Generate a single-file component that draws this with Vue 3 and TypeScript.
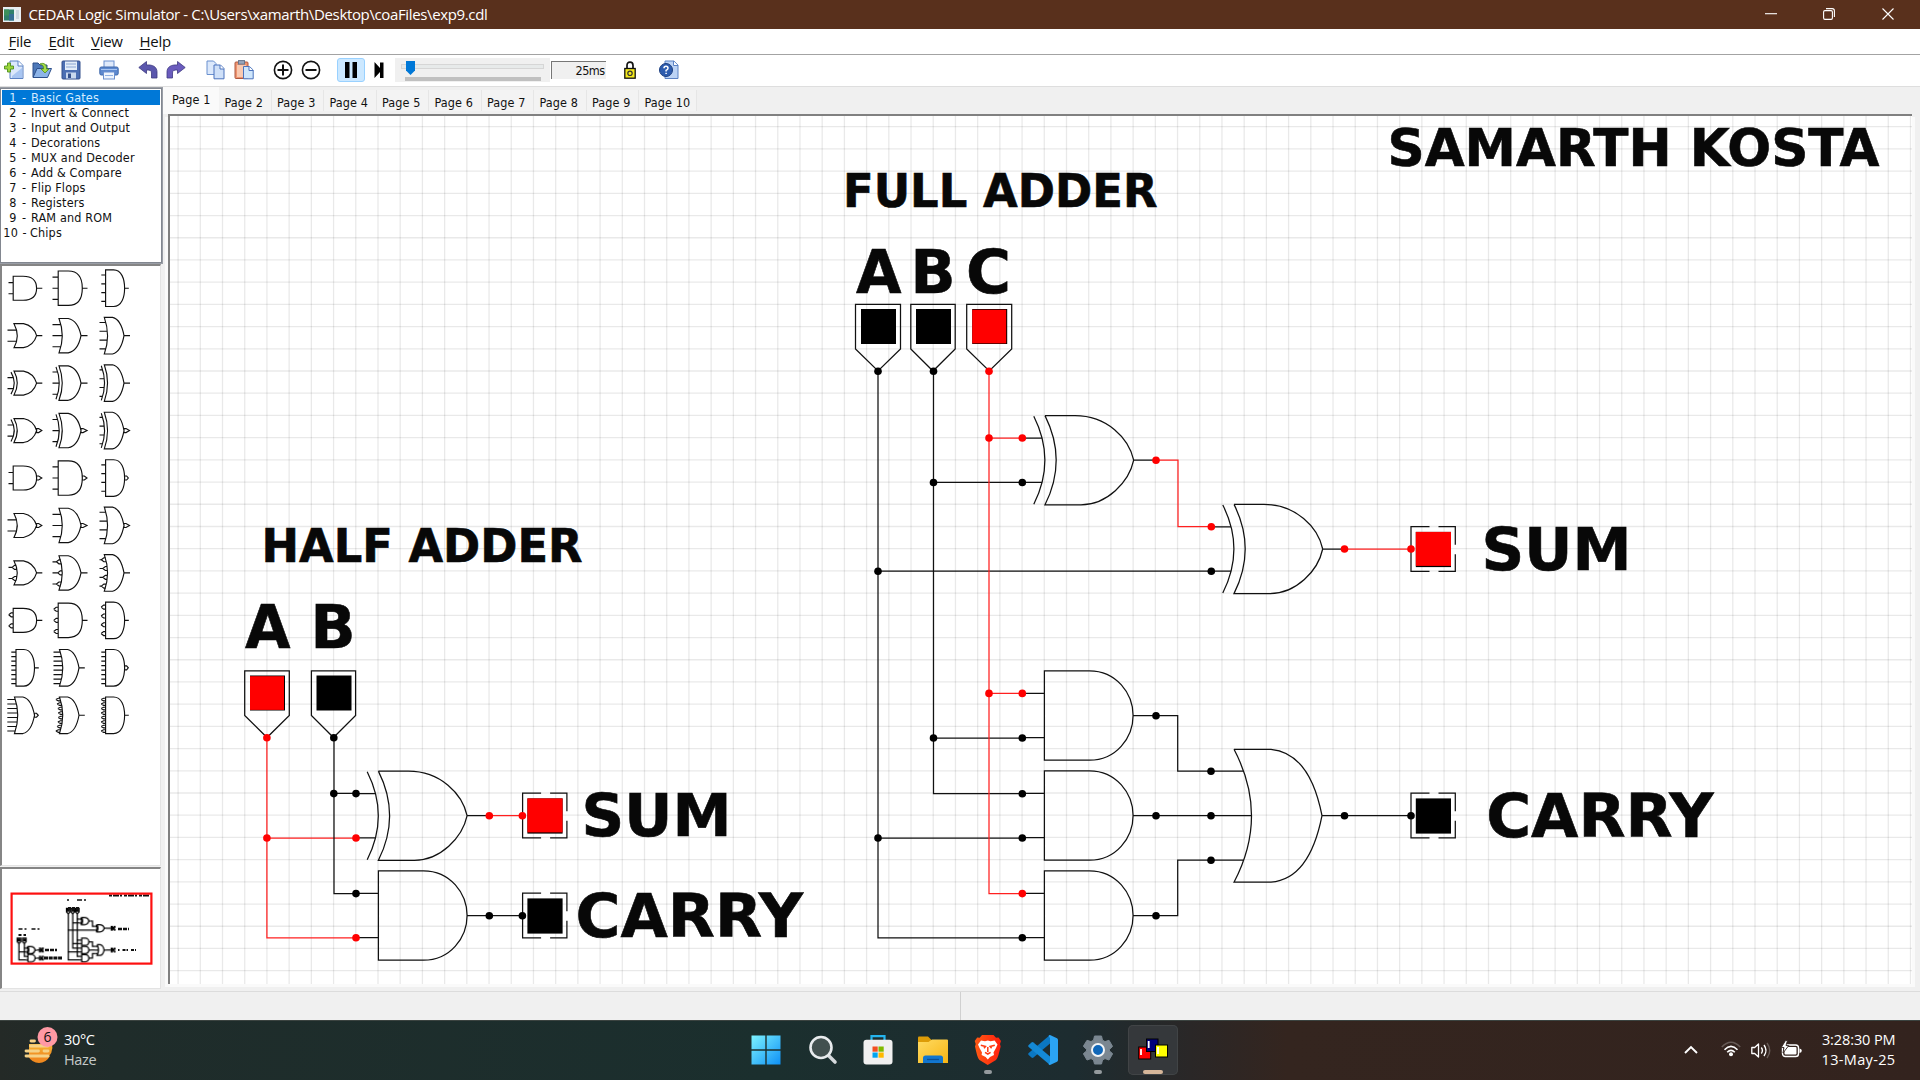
<script setup lang="ts">
interface Label {
  text: string
  x: number
  y: number
  size: number
  width: number
}
interface Wire {
  d: string
  on: boolean
}
interface Dot {
  x: number
  y: number
  on: boolean
}
interface Toggle {
  x: number
  y: number
  w: number
  on: boolean
}
interface Lamp {
  x: number
  y: number
  on: boolean
}
interface PaletteGate {
  col: number
  row: number
  kind: 'and' | 'or' | 'xor'
  inputs: number
  invertOut?: boolean
  invertIn?: boolean
}

const menus = ['File', 'Edit', 'View', 'Help']
const pages = Array.from({ length: 10 }, (_, i) => `Page ${i + 1}`)
const library = [
  'Basic Gates', 'Invert & Connect', 'Input and Output', 'Decorations', 'MUX and Decoder',
  'Add & Compare', 'Flip Flops', 'Registers', 'RAM and ROM', 'Chips',
]

/* ---------- schematic ---------- */
const STEP = 22.21
const gridX = Array.from({ length: 79 }, (_, i) => 178.1 + i * STEP)
const gridY = Array.from({ length: 39 }, (_, i) => 126.7 + i * STEP)

const labels: Label[] = [
  { text: 'SAMARTH KOSTA', x: 1387.5, y: 165.5, size: 51, width: 492 },
  { text: 'FULL ADDER', x: 843, y: 207, size: 46.2, width: 314.5 },
  { text: 'A', x: 856, y: 293, size: 60, width: 45.5 },
  { text: 'B', x: 910.5, y: 293, size: 60, width: 45 },
  { text: 'C', x: 966, y: 293, size: 60, width: 45 },
  { text: 'HALF ADDER', x: 261.5, y: 562.3, size: 46.2, width: 321 },
  { text: 'A', x: 245, y: 648.3, size: 60, width: 45.5 },
  { text: 'B', x: 310.5, y: 648.3, size: 60, width: 45 },
  { text: 'SUM', x: 581.5, y: 836.3, size: 59, width: 150 },
  { text: 'CARRY', x: 575.5, y: 937, size: 60, width: 227.500 },
  { text: 'SUM', x: 1481.5, y: 570, size: 59, width: 150 },
  { text: 'CARRY', x: 1486.2, y: 837, size: 60, width: 227.500 },
]

const xorGates = [
  { x: 1045, y: 460.2 },
  { x: 1234, y: 549 },
  { x: 378.4, y: 815.7 },
]
const andGates = [
  { x: 1044.4, y: 715.5 },
  { x: 1044.4, y: 815.5 },
  { x: 1044.4, y: 915.5 },
  { x: 378.4, y: 915.5 },
]

const wires: Wire[] = [
  { d: 'M878 371V937.8H1022.3M878 571H1211.3M878 838H1022.3', on: false },
  { d: 'M933.5 371V793.7H1022.3M933.5 482.3H1022.3M933.5 738H1022.3', on: false },
  { d: 'M989 371V893.5H1022.3M989 438H1022.3M989 693.3H1022.3', on: true },
  { d: 'M1156 460.2H1178V526.7H1211.3', on: true },
  { d: 'M1344.5 549H1411', on: true },
  { d: 'M1156 715.7H1177.7V771H1211', on: false },
  { d: 'M1156 815.7H1211', on: false },
  { d: 'M1156 915.7H1177.7V860.2H1211', on: false },
  { d: 'M1344.5 815.7H1411', on: false },
  { d: 'M266.9 737.7V937.9H356M266.9 838H356', on: true },
  { d: 'M334 737.7V893.5H356M334 793.4H356', on: false },
  { d: 'M489.3 815.7H522.4', on: true },
  { d: 'M489.3 915.7H522.4', on: false },
]

const on = (x: number, y: number): Dot => ({ x, y, on: true })
const off = (x: number, y: number): Dot => ({ x, y, on: false })
const dots: Dot[] = [
  off(878, 371.3), off(933.5, 371.3), on(989, 371.3),
  on(989, 438), on(1022.3, 438), off(933.5, 482.5), off(1022.3, 482.5),
  off(878, 571.2), off(1211.3, 571.2), on(1156, 460.2), on(1211.3, 526.8),
  on(1344.5, 549), on(1411, 549),
  on(989, 693.4), on(1022.3, 693.4), off(933.5, 738), off(1022.3, 738),
  off(1022.3, 793.7), off(878, 838), off(1022.3, 838), on(1022.3, 893.6), off(1022.3, 937.8),
  off(1156, 715.7), off(1156, 815.7), off(1156, 915.7),
  off(1211, 771.2), off(1211, 815.7), off(1211, 860.2), off(1344.5, 815.7), off(1411, 815.7),
  on(266.9, 737.8), off(333.8, 737.8), off(333.8, 793.6), off(356, 793.6),
  on(266.9, 838), on(356, 838), off(356, 893.6), on(356, 937.8),
  on(489.3, 815.7), on(522.4, 815.7), off(489.3, 915.7), off(522.4, 915.7),
]

const toggles: Toggle[] = [
  { x: 878, y: 371, w: 45, on: false },
  { x: 933, y: 371, w: 44.4, on: false },
  { x: 989.2, y: 371, w: 45, on: true },
  { x: 267, y: 737.5, w: 44.6, on: true },
  { x: 333.5, y: 737.5, w: 44.2, on: false },
]
const lamps: Lamp[] = [
  { x: 522.6, y: 793.2, on: true },
  { x: 522.6, y: 893.2, on: false },
  { x: 1411, y: 526.700, on: true },
  { x: 1411, y: 793.2, on: false },
]

/* ---------- gate palette ---------- */
const gates: PaletteGate[] = []
const kinds: Omit<PaletteGate, 'col' | 'row' | 'inputs'>[] = [
  { kind: 'and' },
  { kind: 'or' },
  { kind: 'xor' },
  { kind: 'xor', invertOut: true },
  { kind: 'and', invertOut: true },
  { kind: 'or', invertOut: true },
  { kind: 'or', invertIn: true },
  { kind: 'and', invertIn: true },
]
kinds.forEach((k, row) => {
  for (let col = 0; col < 3; col++) gates.push({ ...k, row, col, inputs: col + 2 })
})
gates.push({ col: 0, row: 8, kind: 'and', inputs: 8 })
gates.push({ col: 1, row: 8, kind: 'or', inputs: 8 })
gates.push({ col: 2, row: 8, kind: 'and', inputs: 8, invertOut: true })
gates.push({ col: 0, row: 9, kind: 'or', inputs: 8, invertOut: true })
gates.push({ col: 1, row: 9, kind: 'or', inputs: 8, invertIn: true })
gates.push({ col: 2, row: 9, kind: 'and', inputs: 8, invertIn: true })

function gatePath(g: PaletteGate): string {
  const cy = 288.2 + g.row * 47.45
  const wide = g.inputs === 8
  const h = wide || g.inputs === 4 ? 18.3 : g.inputs === 3 ? 17.2 : 12
  const left = wide ? [g.row === 8 ? 16 : 14.5, 59.5, 105.6][g.col] : [g.kind === 'and' ? 13.2 : 14, g.kind === 'and' ? 58.2 : 59, g.kind === 'and' ? 105.6 : 104.3][g.col]
  const tip = wide ? [34.5, 79, 124.6][g.col] : [36.6, g.kind === 'and' ? 82.3 : 81, g.kind === 'and' ? 124.6 : 124][g.col]
  const end = wide ? [38.8, 84.8, 128.8][g.col] : [42.3, 87.5, g.kind === 'and' ? 128.8 : 130][g.col]
  const pin0 = wide ? [g.row === 8 ? 11.3 : 8.3, 53.5, 101.3][g.col] : [8.5, 52.5, g.kind === 'and' ? 101.3 : 99.5][g.col]
  const gap = wide ? 4.5 : g.inputs === 4 ? 8.8 : 11.1
  const curved = g.kind !== 'and'
  const mid = left + (tip - left) * 0.42
  const parts: string[] = []
  if (curved) {
    parts.push(`M${left} ${cy - h}Q${left + 6.5} ${cy} ${left} ${cy + h}H${mid}Q${tip - 3} ${cy + h - 2} ${tip} ${cy}Q${tip - 3} ${cy - h + 2} ${mid} ${cy - h}Z`)
  } else {
    parts.push(`M${left} ${cy - h}V${cy + h}H${mid}C${tip - 3} ${cy + h} ${tip} ${cy + h * 0.5} ${tip} ${cy}C${tip} ${cy - h * 0.5} ${tip - 3} ${cy - h} ${mid} ${cy - h}Z`)
  }
  if (g.kind === 'xor') parts.push(`M${left - 3} ${cy - h + 1}Q${left + 3.5} ${cy} ${left - 3} ${cy + h - 1}`)
  for (let i = 0; i < g.inputs; i++) {
    const shift = (i - (g.inputs - 1) / 2) * gap
    const py = cy + shift
    const bend = curved ? 3.25 * (1 - (shift * shift) / (h * h)) : 0
    const px = left + bend - (g.kind === 'xor' ? 3 : 0)
    if (g.invertIn) {
      const r = wide ? 1.3 : 2
      parts.push(`M${px - 4.5} ${py}L${px - 2} ${py - r}H${px}M${px - 4.5} ${py}L${px - 2} ${py + r}H${px}`)
      if (curved && !wide) parts.push(`M${pin0} ${py}H${px - 4}`)
    } else {
      parts.push(`M${curved && g.col === 0 ? pin0 - 1 : pin0} ${py}H${px}`)
    }
  }
  if (g.invertOut) parts.push(`M${tip} ${cy - 2}H${tip + 2}L${end - 0.5} ${cy}L${tip + 2} ${cy + 2}H${tip}Z`)
  else parts.push(`M${tip} ${cy}H${end}`)
  return parts.join('')
}
</script>

<template>
  <div class="app">
    <header class="titlebar">
      <svg class="app-icon" viewBox="0 0 18 15">
        <rect x="0" y="0" width="18" height="15" fill="#e9eef2" />
        <rect x="1" y="2.5" width="10" height="11" fill="#2f7f6a" />
        <rect x="1" y="2.5" width="5" height="6" fill="#3d8f5c" />
        <rect x="6" y="7" width="5" height="6.5" fill="#356d92" />
        <rect x="13" y="3" width="3" height="9" fill="#cfd8e0" />
      </svg>
      <span class="title">CEDAR Logic Simulator - C:\Users\xamarth\Desktop\coaFiles\exp9.cdl</span>
      <div class="window-buttons">
        <svg viewBox="0 0 12 12"><path d="M0 5.7H12" /></svg>
        <svg viewBox="0 0 12 12"><rect x=".6" y="2.6" width="8.8" height="8.8" rx="1.3" /><path d="M3 .6H9.3Q11.4.6 11.4 2.7V9" /></svg>
        <svg viewBox="0 0 12 12"><path d="M.5.5 11.5 11.5M11.5.5.5 11.5" /></svg>
      </div>
    </header>

    <nav class="menubar">
      <span v-for="m in menus" :key="m" class="menu" :class="m.toLowerCase()"><u>{{ m[0] }}</u>{{ m.slice(1) }}</span>
    </nav>

    <div class="toolbar">
      <div class="group">
        <svg viewBox="0 0 20 20">
          <path d="M6 1H14.500L19 5.500V18.500H6Z" fill="#dbe8fb" stroke="#5b82c4" />
          <path d="M14 1V6H19" fill="#fff" stroke="#5b82c4" />
          <path d="M8 16 18 8V18H8Z" fill="#a9c6f2" />
          <path d="M3.500 3H6.500V6H9.500V9H6.500V12H3.500V9H.5V6H3.500Z" fill="#9bd63c" stroke="#4f8f1d" stroke-width=".9" />
        </svg>
        <svg viewBox="0 0 20 20">
          <path d="M1 17V3H6L8 5H15V17Z" fill="#4d78b8" stroke="#2c4f8a" />
          <path d="M1 17.500 5 8.500H19.500L15.500 17.500Z" fill="#8db4e8" stroke="#2c4f8a" />
          <path d="M8 4C12 2 15 5 14.500 9H17L13 13 9 9H11.500C12 6 10.500 5 8 4Z" fill="#a5dc4b" stroke="#4f8f1d" stroke-width=".8" />
        </svg>
        <svg viewBox="0 0 20 20">
          <rect x="1" y="1" width="18" height="18" rx="1" fill="#4c6fb3" stroke="#34508c" />
          <rect x="4" y="1.500" width="12" height="8.500" fill="#e4edf8" />
          <path d="M5 4H15M5 7H15" stroke="#8aa6d3" />
          <rect x="5" y="12.500" width="10" height="6" fill="#c9d8ee" />
          <rect x="7" y="13.500" width="3" height="4.500" fill="#34508c" />
        </svg>
      </div>
      <div class="group">
        <svg viewBox="0 0 20 20">
          <rect x="5" y="1" width="10" height="7" fill="#dfeafb" stroke="#6a90cf" />
          <rect x=".8" y="7" width="18.400" height="8" rx="1.500" fill="#5d89cf" stroke="#3f68ab" />
          <path d="M2 9.500H18" stroke="#a9c6f2" />
          <rect x="4.500" y="12" width="11" height="7" fill="#eef4fd" stroke="#6a90cf" />
          <path d="M6 15.500H14" stroke="#8fb0e2" />
        </svg>
      </div>
      <div class="group">
        <svg viewBox="0 0 20 20"><path d="M.8 7.500 8.500 1.500V5C15 4.500 19 7 19 12V18H13.500V13C13.500 10.500 12 9.800 8.500 10V13.500Z" fill="#5b57ad" stroke="#3d3a80" stroke-width=".8" /></svg>
        <svg viewBox="0 0 20 20"><path d="M19.200 7.500 11.500 1.500V5C5 4.500 1 7 1 12V18H6.500V13C6.500 10.500 8 9.800 11.500 10V13.500Z" fill="#6a5bbd" stroke="#3d3a80" stroke-width=".8" /></svg>
      </div>
      <div class="group">
        <svg viewBox="0 0 20 20">
          <path d="M2 1H8.500L11 3.500V14.500H2Z" fill="#dbe8fb" stroke="#6a90cf" />
          <path d="M9 5H15.500L19 8.500V18.800H9Z" fill="#cfe0f8" stroke="#4b73bd" />
          <path d="M15 5V9H19" fill="#fff" stroke="#4b73bd" />
        </svg>
        <svg viewBox="0 0 20 20">
          <rect x="1" y="2" width="13" height="16.500" rx="1" fill="#ee9470" stroke="#ad5840" />
          <rect x="3" y="5" width="9" height="12" fill="#f9c9b0" />
          <rect x="4.500" y=".6" width="6" height="3.500" fill="#9aa8bd" stroke="#66758e" />
          <path d="M9.500 6.500H15.500L19.200 10V18.800H9.500Z" fill="#cfe6fb" stroke="#4b73bd" />
          <path d="M15 6.500V10.500H19" fill="#fff" stroke="#4b73bd" />
        </svg>
      </div>
      <div class="group zoom">
        <svg viewBox="0 0 20 20"><circle cx="10" cy="10" r="8.600" fill="none" stroke="#111" stroke-width="1.600" /><path d="M4.500 10H15.500M10 4.500V15.500" stroke="#111" stroke-width="2" /></svg>
        <svg viewBox="0 0 20 20"><circle cx="10" cy="10" r="8.600" fill="none" stroke="#111" stroke-width="1.600" /><path d="M4.500 10H15.500" stroke="#111" stroke-width="2" /></svg>
      </div>
      <div class="pause"><svg viewBox="0 0 20 20"><path d="M4 2H8.500V18H4ZM11.500 2H16V18H11.500Z" fill="#000" /></svg></div>
      <svg class="step" viewBox="0 0 10 18"><path d="M.5 1 6 7V1.500H9.500V17H6V11L.5 17Z" fill="#000" /></svg>
      <div class="slider">
        <div class="track"></div>
        <svg class="thumb" viewBox="0 0 9 14"><path d="M0 0H9V9.500L4.500 14 0 9.500Z" fill="#0078d7" /></svg>
        <div class="gauge"></div>
      </div>
      <div class="readout">25ms</div>
      <svg class="lock" viewBox="0 0 12 18">
        <path d="M3 8V4.500Q3 1.200 6 1.200T9 4.500V8" fill="none" stroke="#111" stroke-width="1.700" />
        <rect x=".8" y="7.500" width="10.400" height="9.700" fill="#f4e91d" stroke="#111" stroke-width="1.300" />
        <circle cx="6" cy="12.300" r="2.200" fill="none" stroke="#333" stroke-width="1.200" />
      </svg>
      <svg class="help-icon" viewBox="0 0 20 20">
        <path d="M6 1H15L19 5V18.500H6Z" fill="#bcd3f5" stroke="#5b82c4" />
        <path d="M14.500 1V5.500H19" fill="#fff" stroke="#5b82c4" />
        <circle cx="7" cy="10" r="6.500" fill="#2d5cae" stroke="#1d3f80" />
        <path d="M5 8.300Q5 6.300 7 6.300T9 8.200Q9 9.300 7.100 10.300V11.500M7.100 12.700V14" fill="none" stroke="#fff" stroke-width="1.500" />
      </svg>
    </div>

    <main class="workspace">
      <aside class="sidebar">
        <ul class="library">
          <li v-for="(name, i) in library" :key="name" :class="{ selected: i === 0 }">
            <span class="num">{{ i + 1 }}</span><span class="dash">-</span><span>{{ name }}</span>
          </li>
        </ul>
        <div class="palette">
          <svg viewBox="2 266 158 599">
            <path v-for="(g, i) in gates" :key="i" :d="gatePath(g)" fill="none" stroke="#111" stroke-width="1.150" />
          </svg>
        </div>
        <div class="overview">
          <svg viewBox="2 869 158 119">
            <g class="mini" transform="translate(-2.600 883.500) scale(.0807 .0815)">
              <use href="#schematic" />
            </g>
            <g stroke="#111" fill="none">
              <path d="M109 895.500H150" stroke-width="2" stroke-dasharray="3 1 6 1 2 2" />
              <path d="M67 900H90" stroke-width="1.600" stroke-dasharray="2 8 5 2" />
              <path d="M68 908.500H79" stroke-width="3" stroke-dasharray="3 1" />
              <path d="M18.500 929H42" stroke-width="1.600" stroke-dasharray="4 2 2 5" />
              <path d="M18.500 935H26" stroke-width="2" stroke-dasharray="3 2" />
              <path d="M45 950H57M118 929H129" stroke-width="2.400" stroke-dasharray="4 1" />
              <path d="M44 958H62" stroke-width="3" stroke-dasharray="4 .7" />
              <path d="M118 950H136" stroke-width="2" stroke-dasharray="1.500 3 3 1" />
            </g>
            <rect x="11.600" y="893.600" width="139.800" height="70" fill="none" stroke="#fd1010" stroke-width="2.200" />
          </svg>
        </div>
      </aside>

      <section class="document">
        <div class="tabs">
          <span v-for="(p, i) in pages" :key="p" class="tab" :class="{ active: i === 0 }">{{ p }}</span>
        </div>
        <div class="canvas">
          <svg viewBox="170 116 1742 868">
            <g stroke="#000" stroke-opacity=".085" stroke-width="1.300">
              <line v-for="x in gridX" :key="'x' + x" :x1="x" :x2="x" y1="116" y2="984" />
              <line v-for="y in gridY" :key="'y' + y" x1="170" x2="1912" :y1="y" :y2="y" />
            </g>
            <g id="schematic" class="schematic">
              <path v-for="(g, i) in xorGates" :key="'xg' + i" :transform="`translate(${g.x} ${g.y})`"
                d="M-22.500 -22.200H-2.500M-22.500 22.200H-2.500M88.700 0H111M0 -44.600H30C62 -44.600 84 -22 88.700 0C84 22 62 44.600 36 44.600H0Q22.400 0 0 -44.600M-11.200 -44Q11 0 -11.200 44" />
              <path v-for="(g, i) in andGates" :key="'ag' + i" :transform="`translate(${g.x} ${g.y})`"
                d="M-22.500 -22.200H0M-22.500 22.200H0M88.700 0H111M0 -44.700H45C72 -44.700 88.700 -22 88.700 0S72 44.700 45 44.700H0Z" />
              <path d="M1211 771H1243.800M1211 815.700H1251.500M1211 860.200H1243.800M1322 815.700H1344.500M1234 749.300H1271C1300 752 1315 780 1322 815.700C1315 851 1300 880 1271 882.200H1234Q1269 815.700 1234 749.300" />
              <path v-for="(w, i) in wires" :key="'w' + i" :d="w.d" :class="{ live: w.on }" />
              <g v-for="(t, i) in toggles" :key="'t' + i" :transform="`translate(${t.x} ${t.y})`">
                <path :d="`M${-t.w / 2} -66.600H${t.w / 2}V-22L0 0L${-t.w / 2} -22Z`" />
                <rect class="block" x="-17" y="-62" width="35" height="35" />
                <rect v-if="t.on" class="block live" x="-17" y="-61.300" width="34" height="33.700" />
              </g>
              <g v-for="(l, i) in lamps" :key="'l' + i" :transform="`translate(${l.x} ${l.y})`">
                <path d="M18.500 0H0V44.600H18.500M27.500 0H44.300V18M44.300 27.500V44.600H27.500" />
                <rect class="block" x="4.800" y="5.200" width="35.200" height="35.200" />
                <rect v-if="l.on" class="block live" x="4.800" y="5.200" width="35.200" height="34" />
              </g>
              <circle v-for="(c, i) in dots" :key="'c' + i" class="dot" :class="{ live: c.on }" :cx="c.x" :cy="c.y" r="3.800" />
            </g>
            <text v-for="(l, i) in labels" :key="'l' + i" class="label" :x="l.x" :y="l.y" :font-size="l.size"
              :textLength="l.width" lengthAdjust="spacingAndGlyphs">{{ l.text }}</text>
          </svg>
        </div>
      </section>
    </main>

    <footer class="statusbar"><div></div><div></div></footer>

    <div class="taskbar">
      <div class="weather">
        <svg viewBox="0 0 36 38">
          <defs>
            <linearGradient id="sun" x1="0" y1="0" x2="0" y2="1"><stop offset="0" stop-color="#f8b833" /><stop offset="1" stop-color="#ec7a1c" /></linearGradient>
          </defs>
          <path d="M5 17H28A13.500 13.500 0 0 1 5 29.500Z" fill="url(#sun)" />
          <path d="M4 29Q8 36 15 36Q22 36 26 29Z" fill="#f08a20" />
          <g stroke="#f5d287" stroke-width="2.800" stroke-linecap="round">
            <path d="M7 14H10.500M6.500 19H24M2 24H14.500M20 24H24M2 29H24" />
          </g>
          <circle cx="23.500" cy="10" r="10" fill="#ff99a4" />
          <text x="23.500" y="15.200" text-anchor="middle" font-size="14" fill="#111">6</text>
        </svg>
        <div class="weather-text"><div>30°C</div><div class="dim">Haze</div></div>
      </div>
      <div class="apps">
        <div class="cell start">
          <svg viewBox="0 0 30 30">
            <defs><linearGradient id="win" x1="0" y1="0" x2="1" y2="1"><stop offset="0" stop-color="#7df3ff" /><stop offset="1" stop-color="#0e90f5" /></linearGradient></defs>
            <path d="M.5.5H14.300V14.300H.5ZM15.700.5H29.500V14.300H15.700ZM.5 15.700H14.300V29.500H.5ZM15.700 15.700H29.500V29.500H15.700Z" fill="url(#win)" />
          </svg>
        </div>
        <div class="cell">
          <svg viewBox="0 0 30 30">
            <path d="M20.500 20.500 27 27" stroke="#d5d9dc" stroke-width="3.600" stroke-linecap="round" />
            <circle cx="13" cy="12.500" r="10.500" fill="#42504f" stroke="#e8ebed" stroke-width="2.600" />
          </svg>
        </div>
        <div class="cell">
          <svg viewBox="0 0 30 30">
            <path d="M8.500 6V1.200H21.500V6" fill="none" stroke="#24b4ee" stroke-width="2.200" />
            <rect x=".5" y="4.800" width="29" height="24.700" rx="3" fill="#f0f0f0" />
            <rect x="9.500" y="11.500" width="5.200" height="5.200" fill="#f25022" /><rect x="15.500" y="11.500" width="5.200" height="5.200" fill="#7fba00" />
            <rect x="9.500" y="17.500" width="5.200" height="5.200" fill="#00a4ef" /><rect x="15.500" y="17.500" width="5.200" height="5.200" fill="#ffb900" />
          </svg>
        </div>
        <div class="cell">
          <svg viewBox="0 0 30 30">
            <defs><linearGradient id="dir" x1="0" y1="0" x2="1" y2="1"><stop offset="0" stop-color="#ffdb62" /><stop offset="1" stop-color="#f7b514" /></linearGradient></defs>
            <path d="M0 12V2.500Q0 1.500 1 1.500H10L13.500 5V12Z" fill="#dd9c07" />
            <path d="M0 7H10.500L14 4.500H29Q30 4.500 30 5.500V28H0Z" fill="url(#dir)" />
            <path d="M5 28V23Q5 20.500 7.500 20.500H22.500Q25 20.500 25 23V28Z" fill="#1276cf" />
            <path d="M9 24.500H21" stroke="#0b4f96" stroke-width="1.300" />
          </svg>
        </div>
        <div class="cell">
          <svg viewBox="0 0 30 30">
            <defs><linearGradient id="lion" x1="0" y1="0" x2="1" y2="0"><stop offset="0" stop-color="#ff5a14" /><stop offset="1" stop-color="#ff1f0e" /></linearGradient></defs>
            <path d="M9 0H20.500L23 2.700 25.500 2.500 28 6 27 9 27.700 11.500C26 18 25 23 23 25L14.700 30 6.500 25C4.500 23 3.500 18 2 11.500L2.700 9 1.700 6 4.200 2.500 6.700 2.700Z" fill="url(#lion)" />
            <path d="M8 5.500 12 6.300 14.800 5.500 17.600 6.300 21.600 5.500 24.500 9.500 23 13 20.500 17.500 21 20 17 22 14.800 24.500 12.600 22 8.600 20 9 17.500 6.500 13 5 9.500Z" fill="#fff" />
            <path d="M7.800 10.300 12.500 11.500 11 13.300M21.800 10.300 17.100 11.500 18.600 13.300M14.800 12V17M12 17.300 14.800 19 17.600 17.300" fill="none" stroke="#ff3c12" stroke-width="1.500" />
          </svg>
          <i class="run"></i>
        </div>
        <div class="cell">
          <svg viewBox="0 0 30 30">
            <path d="M22 0V8.500L5.500 22.500Q4.500 23.300 3.500 22.500L.7 20Q-.3 19 .7 18Z" fill="#0b77c2" />
            <path d="M22 30V21.500L5.500 7.500Q4.500 6.700 3.500 7.500L.7 10Q-.3 11 .7 12Z" fill="#1489d6" />
            <path d="M22 0 29 3.200Q30 3.700 30 5V25Q30 26.300 29 26.800L22 30Q21 30 20.500 29L22 27V3L20.500 1Q21 0 22 0Z" fill="#2ba3f3" />
          </svg>
        </div>
        <div class="cell">
          <svg viewBox="0 0 30 30">
            <path d="M11.500 1H18.500L19.500 5.200 22 6.600 26 5.300 29.500 11.300 29.500 11.500 26.500 14.300V16L29.700 18.700 26 25 22 23.600 19.500 25 18.500 29H11.500L10.500 25 8 23.600 4 25 .3 18.700 3.500 16V14.300L.3 11.300 4 5.300 8 6.600 10.500 5.200Z" fill="#7b8791" stroke="#7b8791" stroke-linejoin="round" />
            <circle cx="15" cy="15" r="6" fill="#1067b8" stroke="#f2f4f6" stroke-width="2" />
          </svg>
          <i class="run"></i>
        </div>
        <div class="cell current">
          <svg viewBox="0 0 30 30">
            <g stroke="#000">
              <rect x=".7" y="12" width="12" height="12" fill="#f00" />
              <rect x="8.500" y="4" width="11.500" height="12.500" fill="#00007c" />
              <rect x="17.500" y="10" width="12" height="12" fill="#ff0" />
            </g>
            <path d="M3 14V20M10.700 6V13M20 12V19" stroke="#fff" stroke-width="1.800" />
          </svg>
          <i class="run wide"></i>
        </div>
      </div>
      <div class="tray">
        <svg class="chevron" viewBox="0 0 14 9"><path d="M1 8 7 2 13 8" fill="none" stroke="#fff" stroke-width="1.900" /></svg>
        <svg class="wifi" viewBox="0 0 20 16">
          <path d="M.8 6Q10 -3.500 19.200 6" fill="none" stroke="#fff" stroke-opacity=".25" stroke-width="1.600" />
          <path d="M3.500 8.700Q10 2 16.500 8.700M6.200 11.300Q10 7.500 13.800 11.300" fill="none" stroke="#fff" stroke-width="1.600" />
          <circle cx="10" cy="13.200" r="2" fill="#fff" />
        </svg>
        <svg class="sound" viewBox="0 0 20 17">
          <path d="M.8 5.500H3.700L7.500 2V15L3.700 11.500H.8Z" fill="none" stroke="#fff" stroke-width="1.300" stroke-linejoin="round" />
          <path d="M10.300 5.500Q12.500 8.500 10.300 11.500M13 3Q17 8.500 13 14" fill="none" stroke="#fff" stroke-width="1.400" />
          <path d="M16 1Q21.500 8.500 16 16" fill="none" stroke="#fff" stroke-opacity=".25" stroke-width="1.400" />
        </svg>
        <svg class="battery" viewBox="0 0 21 17">
          <rect x="1.500" y="4" width="16" height="11.500" rx="2.800" fill="none" stroke="#fff" stroke-width="1.400" />
          <rect x="3.500" y="6" width="12" height="7.500" rx="1" fill="#fff" />
          <path d="M18.500 7.500V12Q20.800 11.500 20.800 9.750T18.500 7.500Z" fill="#fff" />
          <path d="M4.500 -.5 .3 6.500H3L2 12 7.800 4.500H5L6.500 -.5Z" fill="#fff" stroke="#33241f" stroke-width=".9" />
        </svg>
        <div class="clock"><div>3:28:30 PM</div><div class="date">13-May-25</div></div>
      </div>
    </div>
  </div>
</template>

<style>
html,
body {
  margin: 0;
  overflow: hidden;
}
</style>

<style scoped>
.app {
  width: 1920px;
  height: 1080px;
  display: flex;
  flex-direction: column;
  background: #f0f0f0;
  color: #111;
  font-family: "DejaVu Sans Condensed", "DejaVu Sans", sans-serif;
  overflow: hidden;
}
svg {
  display: block;
  flex: none;
}

.titlebar {
  height: 29px;
  flex: none;
  display: flex;
  align-items: center;
  background: #59301c;
  color: #fff;
  font-family: "Open Sans", "Noto Sans", sans-serif;
  font-size: 15px;
}
.app-icon {
  width: 18px;
  height: 15px;
  margin: 0 0 1px 2.5px;
}
.title {
  margin: 0 0 2px 8px;
  letter-spacing: -0.36px;
  white-space: nowrap;
}
.window-buttons {
  display: flex;
  gap: 46.5px;
  margin-left: auto;
  margin-right: 26px;
  margin-bottom: 1px;
}
.window-buttons svg {
  width: 12px;
  height: 12px;
  fill: none;
  stroke: #fff;
  stroke-width: 1.1;
}
.window-buttons svg:nth-child(2) {
  margin: 0 1px 0 -1px;
}

.menubar {
  height: 24.5px;
  flex: none;
  display: flex;
  align-items: center;
  padding-left: 8.5px;
  background: #fff;
  border-bottom: 1.500px solid #a3a3a3;
  font-family: "Open Sans", "Noto Sans", sans-serif;
  font-size: 15px;
  letter-spacing: -0.3px;
}
.menu {
  line-height: 24px;
  margin-bottom: 1px;
}
.menu u {
  text-underline-offset: 2px;
}
.file { width: 40px; }
.edit { width: 42.5px; }
.view { width: 48.5px; }

.toolbar {
  height: 31.5px;
  flex: none;
  display: flex;
  align-items: center;
  padding-left: 3.5px;
  background: #fff;
  border-bottom: 1px solid #dedede;
}
.group {
  display: flex;
  gap: 8.8px;
  margin-right: 18.3px;
}
.group.zoom {
  margin-left: 0.7px;
}
.group svg,
.help-icon {
  width: 20px;
  height: 20px;
}
.pause {
  width: 28px;
  height: 24px;
  margin-left: -2.500px;
  display: flex;
  align-items: center;
  justify-content: center;
  box-sizing: border-box;
  border: 1px solid #99d1ff;
  border-radius: 3px;
  background: #cce8ff;
}
.pause svg {
  width: 20px;
  height: 20px;
}
.step {
  width: 10px;
  height: 18px;
  margin-left: 8.5px;
}
.slider {
  width: 155px;
  height: 24px;
  margin-left: 11px;
  box-sizing: border-box;
  padding: 6px 6px 0;
  background: #f0f0f0;
  position: relative;
}
.track {
  height: 5px;
  box-sizing: border-box;
  border: 1px solid #d6d6d6;
  background: #e7eaea;
}
.thumb {
  position: absolute;
  left: 11.5px;
  top: 3px;
  width: 9px;
  height: 14px;
}
.gauge {
  height: 4px;
  margin: 8px 3px 0 4px;
  background: #c0c0c0;
}
.readout {
  width: 55px;
  height: 18px;
  margin-left: 1px;
  box-sizing: border-box;
  border-top: 1.500px solid #777;
  border-left: 1.500px solid #777;
  background: #f0f0f0;
  font-size: 12.5px;
  line-height: 18px;
  text-align: right;
  padding-right: 1px;
  letter-spacing: -0.5px;
}
.lock {
  width: 12px;
  height: 18px;
  margin-left: 18px;
}
.help-icon {
  margin-left: 23px;
}

.workspace {
  height: 904px;
  flex: none;
  display: flex;
  border-bottom: 1px solid #dcdcdc;
}
.sidebar {
  width: 163px;
  flex: none;
  display: flex;
  flex-direction: column;
}
.library {
  list-style: none;
  margin: 1px 0 0;
  width: 162px;
  height: 175px;
  padding: 1px;
  box-sizing: border-box;
  border: 1px solid #828790;
  outline: 0.500px solid #9a9ea6;
  background: #fff;
  font-size: 12.5px;
}
.library li {
  display: flex;
  height: 15px;
  line-height: 16px;
  letter-spacing: 0.16px;
  white-space: nowrap;
}
.library .selected {
  background: #0078d7;
  color: #d5ecff;
}
.num {
  width: 14.5px;
  text-align: right;
}
.library li:last-child .num {
  width: 16px;
}
.library li:last-child .dash {
  width: 7.5px;
  padding-left: 4.5px;
}
.dash {
  width: 9px;
  padding-left: 5.500px;
}
.palette,
.overview {
  width: 158px;
  background: #fff;
  border-top: 2px solid #858585;
  border-left: 2px solid #858585;
  border-right: 1px solid #e3e3e3;
  border-bottom: 1px solid #e3e3e3;
}
.palette {
  height: 599px;
  margin-top: 1px;
}
.overview {
  height: 119px;
  margin-top: 0.500px;
}
.palette svg,
.overview svg {
  width: 158px;
}
.palette svg { height: 599px; }
.overview svg { height: 119px; }
.mini { filter: brightness(0); }

.document {
  flex: 1;
  display: flex;
  flex-direction: column;
}
.tabs {
  height: 27px;
  display: flex;
  align-items: flex-start;
  font-size: 12.5px;
}
.tab {
  width: 52.5px;
  height: 21px;
  margin-top: 3px;
  box-sizing: border-box;
  padding-left: 5.500px;
  line-height: 25px;
  letter-spacing: 0.1px;
  white-space: nowrap;
  background: #f3f3f3;
  border-right: 1px solid #e6e6e6;
}
.tab.active {
  width: 56px;
  height: 27px;
  margin-top: 0;
  padding-left: 9px;
  line-height: 26px;
  background: #fafafa;
  border-right: none;
}
.tab:last-child {
  width: 58px;
}
.canvas {
  width: 1742px;
  height: 868px;
  margin-left: 5px;
  background: #fff;
  border-top: 2px solid #808080;
  border-left: 2px solid #808080;
  box-shadow: 3px 3px 0 #fafafa, -3px 3px 0 #fafafa;
}
.canvas svg {
  width: 1742px;
  height: 868px;
}
.schematic path {
  fill: none;
  stroke: #111;
  stroke-width: 1.25;
  vector-effect: non-scaling-stroke;
}
.schematic path.live {
  stroke: #ff2020;
}
.block,
.dot {
  fill: #000;
}
.block.live,
.dot.live {
  fill: #f00;
}
.label {
  font-family: "DejaVu Sans", sans-serif;
  font-weight: 700;
  fill: #080808;
  stroke: #080808;
  stroke-width: 0.6;
}

.statusbar {
  height: 28px;
  flex: none;
  display: flex;
}
.statusbar div:first-child {
  width: 960px;
  border-right: 1px solid #d0d0d0;
}

.taskbar {
  flex: 1;
  display: flex;
  color: #fff;
  font-family: "Open Sans", "Noto Sans", sans-serif;
  font-size: 14.5px;
  background: linear-gradient(90deg, #242a27 0, #1f2c2a 6%, #1b2f2e 40%, #1d2c30 56%, #2a2727 62%, #34251f 67%, #33231e 100%);
  border-top: 1px solid #3b4340;
  box-sizing: border-box;
}
.weather {
  width: 739px;
  display: flex;
}
.weather svg {
  width: 36px;
  height: 38px;
  margin: 6px 0 0 24px;
}
.weather-text {
  margin: 8.500px 0 0 4px;
  line-height: 20px;
  letter-spacing: -0.35px;
}
.dim {
  color: #c4c9c8;
}
.apps {
  display: flex;
  padding-top: 4px;
}
.cell {
  width: 50px;
  height: 50px;
  margin: 0 2.500px;
  display: flex;
  flex-direction: column;
  align-items: center;
  border-radius: 5px;
}
.cell.start {
  margin: 0 5px 0 1.500px;
}
.cell svg {
  width: 30px;
  height: 30px;
  margin-top: 10px;
}
.current {
  background: #35383b;
  box-shadow: inset 0 0 0 1px #414446;
}
.run {
  width: 8px;
  height: 4px;
  margin-top: 5px;
  border-radius: 2px;
  background: #949a9d;
}
.run.wide {
  width: 20px;
  background: #d6b699;
}
.tray {
  margin-left: auto;
  display: flex;
  align-items: flex-start;
}
.chevron { width: 14px; height: 9px; margin: 24px 23px 0 0; }
.wifi { width: 20px; height: 16px; margin: 20px 10px 0 0; }
.sound { width: 20px; height: 17px; margin: 20.500px 9.500px 0 0; }
.battery { width: 21px; height: 17px; margin: 19.500px 0 0; overflow: visible; }
.clock {
  width: 94px;
  margin: 8.500px 24.500px 0 0;
  text-align: right;
  line-height: 20px;
  letter-spacing: -0.1px;
}
.date {
  letter-spacing: 0.35px;
}
</style>
